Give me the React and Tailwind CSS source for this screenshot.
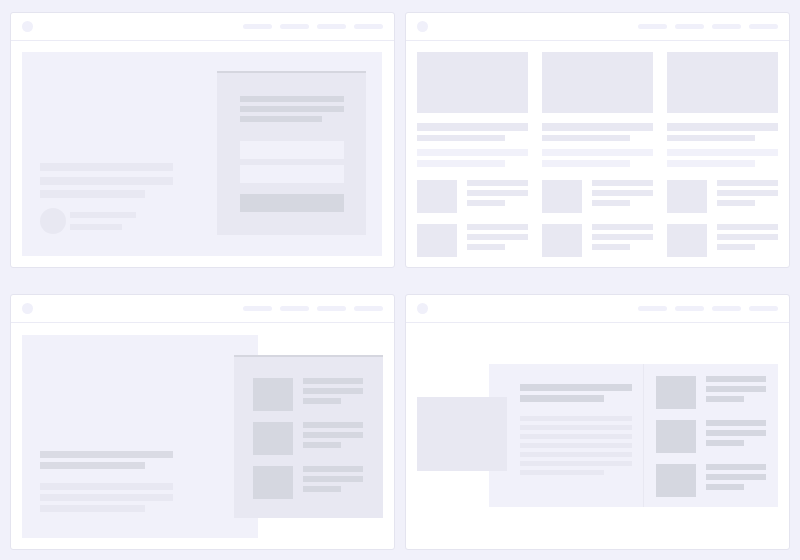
import React from 'react';

const Bar = ({ w, h = 'h-[6px]', c = 'bg-[#e8e8f2]', mt = '' }) => (
  <div className={`${w} ${h} ${c} ${mt}`} />
);

const Frame = ({ children }) => (
  <div className="h-[256px] bg-white border border-[#e4e4ef] rounded-[3px] flex flex-col overflow-hidden">
    {/* Browser header */}
    <div className="h-[28px] shrink-0 border-b border-[#ebebf5] flex items-center justify-between pl-[11px] pr-[11px]">
      <div className="w-[11px] h-[11px] rounded-full bg-[#f0f0fa]" />
      <div className="flex gap-[8px]">
        {[0, 1, 2, 3].map(i => (
          <div key={i} className="w-[29px] h-[5px] rounded-full bg-[#f0f0fa]" />
        ))}
      </div>
    </div>
    <div className="relative flex-1">{children}</div>
  </div>
);

const Item = ({ thumb, line, lineW = 'w-[61px]' }) => (
  <div className="flex">
    <div className={`w-[40px] h-[33px] ${thumb}`} />
    <div className="ml-[10px] flex flex-col gap-[4px]">
      <Bar w={lineW} c={line} />
      <Bar w={lineW} c={line} />
      <Bar w="w-[38px]" c={line} />
    </div>
  </div>
);

const LandingFrame = () => (
  <div className="ml-[11px] mt-[11px] w-[360px] h-[204px] bg-[#f1f1fa] flex items-end pl-[18px] pr-[16px] pt-[19px] pb-[21px]">
    <div className="flex-1 flex flex-col pb-[1px]">
      <Bar w="w-[133px]" h="h-[8px]" />
      <Bar w="w-[133px]" h="h-[8px]" mt="mt-[6px]" />
      <Bar w="w-[105px]" h="h-[8px]" mt="mt-[5px]" />
      <div className="flex mt-[10px]">
        <div className="w-[26px] h-[26px] rounded-full bg-[#e8e8f2]" />
        <div className="ml-[4px] pt-[4px] flex flex-col">
          <Bar w="w-[66px]" />
          <Bar w="w-[52px]" mt="mt-[6px]" />
        </div>
      </div>
    </div>
    <div className="w-[149px] h-[164px] bg-[#e8e8f2] border-t-2 border-[#d5d6df] px-[23px] pt-[23px] flex flex-col">
      <Bar w="w-[104px]" c="bg-[#d5d7e0]" />
      <Bar w="w-[104px]" c="bg-[#d5d7e0]" mt="mt-[4px]" />
      <Bar w="w-[82px]" c="bg-[#d5d7e0]" mt="mt-[4px]" />
      <div className="w-[104px] h-[18px] bg-[#f1f1fa] mt-[19px]" />
      <div className="w-[104px] h-[18px] bg-[#f1f1fa] mt-[6px]" />
      <div className="w-[104px] h-[18px] bg-[#d5d7e0] mt-[11px]" />
    </div>
  </div>
);

const GridFrame = () => (
  <div className="pl-[11px] pt-[11px] flex gap-[14px]">
    {[0, 1, 2].map(i => (
      <div key={i} className="w-[111px] flex flex-col">
        <div className="h-[61px] bg-[#e8e8f2]" />
        <Bar w="w-full" h="h-[8px]" mt="mt-[10px]" />
        <Bar w="w-[88px]" mt="mt-[4px]" />
        <Bar w="w-full" h="h-[7px]" c="bg-[#f1f1fa]" mt="mt-[8px]" />
        <Bar w="w-[88px]" h="h-[7px]" c="bg-[#f1f1fa]" mt="mt-[4px]" />
        <div className="mt-[13px] flex flex-col gap-[11px]">
          <Item thumb="bg-[#e8e8f2]" line="bg-[#e8e8f2]" />
          <Item thumb="bg-[#e8e8f2]" line="bg-[#e8e8f2]" />
        </div>
      </div>
    ))}
  </div>
);

const SplitFrame = () => (
  <>
    <div className="ml-[11px] mt-[12px] w-[236px] h-[203px] bg-[#f1f1fa] flex flex-col justify-end pl-[18px] pb-[26px]">
      <Bar w="w-[133px]" h="h-[7px]" c="bg-[#dadbe4]" />
      <Bar w="w-[105px]" h="h-[7px]" c="bg-[#dadbe4]" mt="mt-[4px]" />
      <Bar w="w-[133px]" h="h-[7px]" mt="mt-[14px]" />
      <Bar w="w-[133px]" h="h-[7px]" mt="mt-[4px]" />
      <Bar w="w-[105px]" h="h-[7px]" mt="mt-[4px]" />
    </div>
    {/* Panel lying over the hero */}
    <div className="absolute left-[223px] top-[32px] w-[149px] h-[163px] bg-[#e8e8f2] border-t-2 border-[#d5d6df] pl-[19px] pt-[21px] flex flex-col gap-[11px]">
      {[0, 1, 2].map(i => (
        <Item key={i} thumb="bg-[#d5d7e0]" line="bg-[#d5d7e0]" lineW="w-[60px]" />
      ))}
    </div>
  </>
);

const ArticleFrame = () => (
  <>
    <div className="flex justify-end pr-[11px] pt-[41px]">
      <div className="w-[289px] h-[143px] bg-[#f1f1fa] flex">
        <div className="w-[155px] border-r border-[#e8e8f2] pl-[31px] pt-[20px] flex flex-col">
          <Bar w="w-[112px]" h="h-[7px]" c="bg-[#d5d7e0]" />
          <Bar w="w-[84px]" h="h-[7px]" c="bg-[#d5d7e0]" mt="mt-[4px]" />
          <div className="mt-[14px] flex flex-col gap-[4px]">
            {[0, 1, 2, 3, 4, 5].map(i => (
              <Bar key={i} w="w-[112px]" h="h-[5px]" />
            ))}
            <Bar w="w-[84px]" h="h-[5px]" />
          </div>
        </div>
        <div className="pl-[12px] pt-[12px] flex flex-col gap-[11px]">
          {[0, 1, 2].map(i => (
            <Item key={i} thumb="bg-[#d5d7e0]" line="bg-[#d5d7e0]" lineW="w-[60px]" />
          ))}
        </div>
      </div>
    </div>
    {/* Image lying over the article card */}
    <div className="absolute left-[11px] top-[74px] w-[90px] h-[74px] bg-[#e8e8f2]" />
  </>
);

export default function App() {
  return (
    <div className="w-[800px] h-[560px] bg-[#f1f1fa] pt-[12px] px-[10px] overflow-hidden">
      <div className="grid grid-cols-[385px_385px] gap-x-[10px] gap-y-[26px]">
        <Frame><LandingFrame /></Frame>
        <Frame><GridFrame /></Frame>
        <Frame><SplitFrame /></Frame>
        <Frame><ArticleFrame /></Frame>
      </div>
    </div>
  );
}
